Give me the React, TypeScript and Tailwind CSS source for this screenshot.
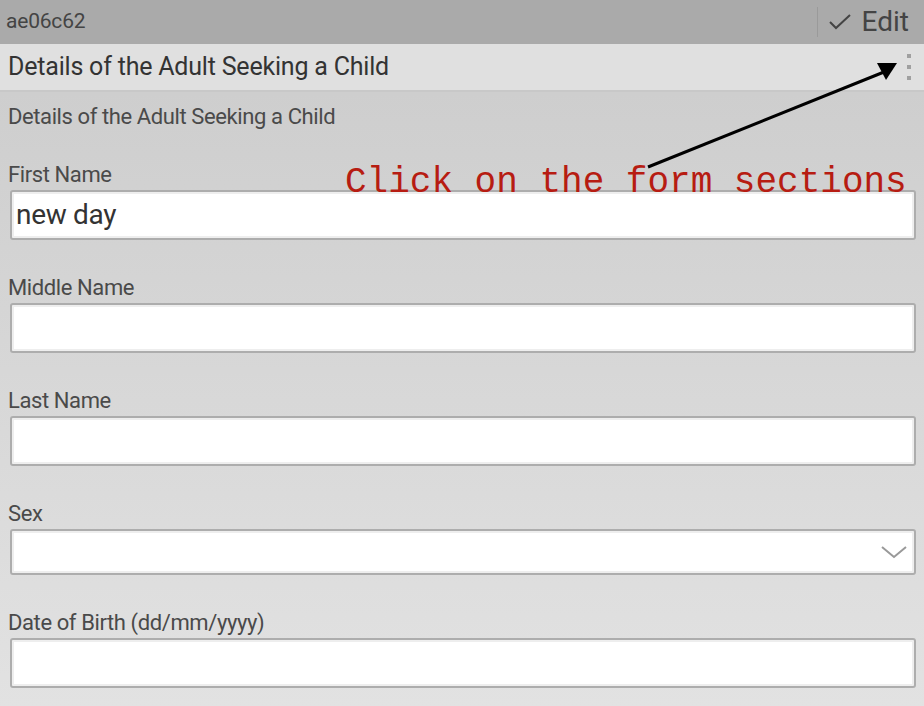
import React from 'react';

const fields = [
  { label: 'First Name', value: 'new day' },
  { label: 'Middle Name', value: '' },
  { label: 'Last Name', value: '' },
  { label: 'Sex', value: '', select: true },
  { label: 'Date of Birth (dd/mm/yyyy)', value: '' },
];

function Field({ label, value, select }: { label: string; value: string; select?: boolean }) {
  return (
    <div className="mb-[36px]">
      <div className="h-[24px] text-[22px] leading-[24px] text-[#4a4a4a] tracking-[-0.4px]">{label}</div>
      <div
        className={`mt-[3px] ml-[2px] flex items-center rounded-[3px] border-2 border-[#adadad] bg-white shadow-[inset_0_0_0_2px_#eeeeee] ${
          select ? 'h-[46px]' : 'h-[50px]'
        }`}
      >
        <span className="pl-[4px] text-[28px] text-[#333] tracking-[-0.3px]">{value}</span>
        {select && (
          <svg className="ml-auto mr-[6px]" width="28" height="16" viewBox="0 0 28 16">
            <path d="M2 3 L14 13 L26 3" fill="none" stroke="#999" strokeWidth="2" />
          </svg>
        )}
      </div>
    </div>
  );
}

export default function App() {
  return (
    <div
      className="relative w-[924px] h-[706px] overflow-hidden"
      style={{ fontFamily: 'Roboto, "Noto Sans", sans-serif' }}
    >
      <div className="flex h-[44px] items-center bg-[#aaaaaa] pl-[6px]">
        <span className="text-[21px] text-[#444] tracking-[-0.2px]">ae06c62</span>
        <div className="ml-auto flex h-full items-center">
          <div className="h-[30px] w-px bg-[#9a9a9a]" />
          <svg className="ml-[10px]" width="24" height="18" viewBox="0 0 24 18">
            <path d="M2 9 L8 15 L22 2" fill="none" stroke="#444" strokeWidth="2" />
          </svg>
          <span className="ml-[10px] mr-[15px] text-[28px] text-[#444]">Edit</span>
        </div>
      </div>

      <div className="flex h-[48px] items-center border-b-2 border-[#c8c8c8] bg-[#e0e0e0] pl-[8px]">
        <span className="text-[25px] text-[#333] tracking-[-0.2px]">Details of the Adult Seeking a Child</span>
        <div className="ml-auto mr-[13px] flex flex-col gap-[7px]">
          <div className="h-[4px] w-[4px] bg-[#a0a0a0]" />
          <div className="h-[4px] w-[4px] bg-[#a0a0a0]" />
          <div className="h-[4px] w-[4px] bg-[#a0a0a0]" />
        </div>
      </div>

      <div className="h-[614px] bg-gradient-to-b from-[#cecece] to-[#e2e2e2] px-[8px] pt-[13px]">
        <div className="h-[24px] text-[22px] leading-[24px] text-[#4a4a4a] tracking-[-0.4px]">
          Details of the Adult Seeking a Child
        </div>
        <div className="mt-[34px]">
          {fields.map((f) => (
            <Field key={f.label} {...f} />
          ))}
        </div>
      </div>

      <div
        className="absolute left-[345px] top-[163px] text-[36px] leading-[40px] text-[#b71c12]"
        style={{ fontFamily: '"Liberation Mono", "Courier New", monospace' }}
      >
        Click on the form sections
      </div>
      <svg className="absolute left-0 top-0" width="924" height="706" viewBox="0 0 924 706">
        <line x1="648" y1="167" x2="884" y2="72" stroke="#000" strokeWidth="3" />
        <polygon points="897,63 877,63 886,80" fill="#000" />
      </svg>
    </div>
  );
}
